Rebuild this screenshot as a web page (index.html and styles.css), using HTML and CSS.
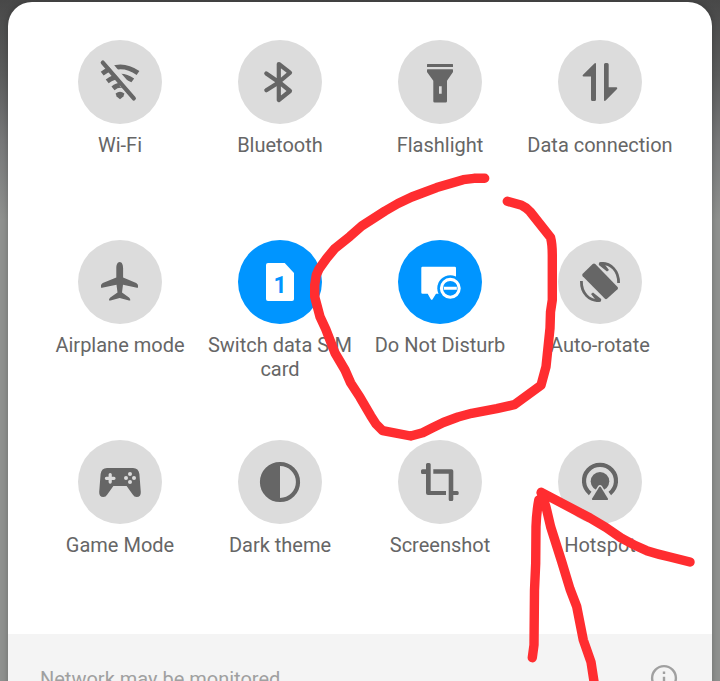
FILE: index.html
```html
<!DOCTYPE html>
<html lang="en">
<head>
<meta charset="utf-8">
<title>Quick settings</title>
<link rel="stylesheet" href="styles.css">
</head>
<body>
<main class="sheet">
  <section class="tiles">
    <div class="tile">
      <svg class="icon" viewBox="0 0 84 84">
        <g class="line arcs">
          <path d="M24.2 33.6Q42 20.5 60 33"/>
          <path d="M29.2 41.4Q42 31.5 54.8 40.4"/>
          <path d="M35 48.4Q42 42.5 49 47.8"/>
        </g>
        <path class="gap" d="M27.4 19L62 59"/>
        <path class="gap" d="M43 44L53 51"/>
        <path class="line slash" d="M24.8 22.6L55.8 58.4"/>
        <path d="M37.6 53.6Q42 49.8 46.4 53.6L45.4 56.5L42 59.3L38.6 56.5Z"/>
      </svg>
      <span class="label">Wi-Fi</span>
    </div>
    <div class="tile">
      <svg class="icon" viewBox="0 0 84 84">
        <path class="line" d="M28.3 33.4L41 42.2L28.3 50.2M40.8 24L52 32.6L41 42L52 51L40.8 60Z"/>
      </svg>
      <span class="label">Bluetooth</span>
    </div>
    <div class="tile">
      <svg class="icon" viewBox="0 0 84 84">
        <rect x="29" y="24" width="26" height="3" rx=".5"/>
        <path fill-rule="evenodd" d="M29.5 29.3H54.5Q55 29.3 55 30V32L49 40.8V61.2Q49 62.6 47.6 62.6H36.7Q35.3 62.6 35.3 61.2V40.8L29 32V30Q29 29.3 29.5 29.3ZM41 46.3V53.7H43.7V46.3Z"/>
      </svg>
      <span class="label">Flashlight</span>
    </div>
    <div class="tile">
      <svg class="icon" viewBox="0 0 84 84">
        <path d="M36.4 23.4Q38 22.3 38 24.2V59.5Q38 61 36.5 61H34.5Q33 61 33 59.5V36.6H25.5Q24 36 24.8 34.9ZM47.5 23H49.2Q50.7 23 50.7 24.5V47.2H58.5Q60 47.7 59 49L47.7 60.6Q46 61.7 46 59.8V24.5Q46 23 47.5 23Z"/>
      </svg>
      <span class="label">Data connection</span>
    </div>

    <div class="tile">
      <svg class="icon" viewBox="0 0 84 84">
        <path d="M41.7 22C44 22 45.1 25 45.1 28V37.5L58.2 43Q60 44 60 45.5V47.2Q60 48 59 47.7L45 44.7L44 52.5L51 57.5Q52.3 58.6 52.3 60Q52.3 60.8 51 60.4L41.7 58L32.5 60.4Q31 60.8 31 60Q31 58.6 32.3 57.5L39.5 52.5L38.5 44.7L24 47.7Q23 48 23 47.2V45.5Q23 44 24.8 43L38.3 37.5V28C38.3 25 39.4 22 41.7 22Z"/>
      </svg>
      <span class="label">Airplane mode</span>
    </div>
    <div class="tile on">
      <svg class="icon" viewBox="0 0 84 84">
        <path d="M30 23H46.7L56 33V59Q56 61 54 61H30Q28 61 28 59V25Q28 23 30 23Z"/>
        <text class="digit" x="42" y="53.3">1</text>
      </svg>
      <span class="label">Switch data SIM card</span>
    </div>
    <div class="tile on">
      <svg class="icon" viewBox="0 0 84 84">
        <path d="M24.5 26.7H56.8Q58 26.7 58 27.9V53.7H38L34.6 59.2Q33.7 60.2 32.8 59.2L29.7 53.7H24.5Q23.3 53.7 23.3 52.5V27.9Q23.3 26.7 24.5 26.7Z"/>
        <circle class="halo" cx="52.3" cy="48.3" r="13"/>
        <path class="ring" d="M43.4 48.3a8.9 8.9 0 1 0 17.8 0a8.9 8.9 0 1 0-17.8 0ZM45.8 48.3H58.8"/>
      </svg>
      <span class="label">Do Not Disturb</span>
    </div>
    <div class="tile">
      <svg class="icon" viewBox="0 0 84 84">
        <path d="M34.7 24Q36 23 37.3 24L59.6 47Q60.6 48.2 59.5 49.3L49 58.8Q47.9 59.7 46.7 58.6L24.7 36.2Q23.6 35 24.7 33.8Z"/>
        <g id="turn">
          <path class="line thin" d="M42 23.6C53 22.5 60.8 31 60.6 43"/>
          <path d="M41 22.5L46 22.2L47.5 25.6L51 30L49 31.4L40.8 25Z"/>
        </g>
        <use href="#turn" transform="rotate(180 42 42)"/>
      </svg>
      <span class="label">Auto-rotate</span>
    </div>

    <div class="tile">
      <svg class="icon" viewBox="0 0 84 84">
        <path d="M29 28H55Q60.6 28 61.4 34L62.8 52Q63 57 58.7 57Q56.2 57 54.7 54.5L48.6 46H35.4L29.3 54.5Q27.8 57 25.3 57Q21 57 21.2 52L22.6 34Q23.4 28 29 28Z"/>
        <path class="cut" d="M28.4 38.3H36M32.2 34.5V42.1"/>
        <g class="dots"><circle cx="52" cy="34.1" r="2"/><circle cx="52" cy="42" r="2"/><circle cx="48" cy="38" r="2"/><circle cx="56" cy="38" r="2"/></g>
      </svg>
      <span class="label">Game Mode</span>
    </div>
    <div class="tile">
      <svg class="icon" viewBox="0 0 84 84">
        <circle class="line" cx="42" cy="42" r="18"/>
        <path d="M42 23V61A19 19 0 0 1 42 23Z"/>
      </svg>
      <span class="label">Dark theme</span>
    </div>
    <div class="tile">
      <svg class="icon" viewBox="0 0 84 84">
        <path d="M29.5 23H31.2Q32.7 23 32.7 24.5V51H48V55H30Q28 55 28 53V34H24.5Q23 34 23 32.5V30.8Q23 29.3 24.5 29.3H28V24.5Q28 23 29.5 23ZM35.3 29.3H53.5Q55.3 29.3 55.3 31V51H59.2Q60.7 51 60.7 52.5V53.5Q60.7 55 59.2 55H55.3V59.5Q55.3 61 53.8 61H52.2Q50.7 61 50.7 59.5V33.7H35.3Z"/>
      </svg>
      <span class="label">Screenshot</span>
    </div>
    <div class="tile">
      <svg class="icon" viewBox="0 0 84 84">
        <path class="line ends" d="M32.2 53.5A16 16 0 1 1 51.8 53.5"/>
        <circle cx="42" cy="41.3" r="9.3"/>
        <path class="wedge" d="M41.2 47Q42 45.8 42.8 47L50 58.7Q50.5 60 49 60H35Q33.5 60 34 58.7Z"/>
      </svg>
      <span class="label">Hotspot</span>
    </div>
  </section>
  <footer class="footer">
    <span>Network may be monitored</span>
    <svg class="info" viewBox="0 0 28 28">
      <circle cx="14" cy="14" r="11.9"/>
      <path d="M14 7.4V10M14 12.8V21"/>
    </svg>
  </footer>
</main>
<svg class="marker" viewBox="0 0 720 681">
  <path d="M484.7 178.3L474 178.3L463.3 179.7L436.7 187.6L411.7 197L398 203.5L385 211L361.7 226L350 236.3L335 248.3L326.7 258.3L319 269L316.3 275L314.7 285V296.7L320 316.7L325.7 329L335 353L345 370L350.7 383L360 397.3L370.7 415.7L376 424L382.7 430.7L410.7 436L422.7 432.7L432 428L443.3 422.5L458 417L471.7 413.3L496.7 408.7L514.3 404.7L541 385.3L546 366.7L550 328.3L550.5 312L552.3 300V255Q552.3 244 550.5 237.3L530 211.5Q526 207 521.7 205.3L507.3 201.3"/>
  <path d="M690 562L670 557Q657 554 646.7 550.7Q634 545.5 621.7 538.3L606 527.5L590 518L541.3 492.3"/>
  <path d="M538.8 500Q536.5 512 536 526.7L535.7 563.3L534.5 590L534 645L532.3 657.7"/>
  <path d="M541.3 493L546 507L550.7 527L561.5 561L570 589L576.7 606.5L583.3 640L591 662L594.7 686"/>
</svg>
</body>
</html>
```
FILE: styles.css
```css
* {
  box-sizing: border-box;
}

body {
  margin: 0;
  height: 681px;
  overflow: hidden;
  padding: 2px 8px 0;
  font-family: Roboto, "Liberation Sans", sans-serif;
  font-size: 20px;
  line-height: 24px;
  background: linear-gradient(#484848 0, #5c5d5d 75px, #777879 140px, #909290 220px, #909290 100%);
}

.sheet {
  height: 700px;
  overflow: hidden;
  border-radius: 24px 24px 0 0;
  background: #fff;
  box-shadow: 0 0 7px rgba(0, 0, 0, 0.25);
}

.tiles {
  display: grid;
  grid-template-columns: repeat(4, 160px);
  grid-auto-rows: 200px;
  height: 632px;
  padding: 38px 32px 0;
}

.tile {
  --disc: #dcdcdc;
  --glyph: #666;
  display: flex;
  flex-direction: column;
  align-items: center;
  gap: 9px;
}

.on {
  --disc: #0095ff;
  --glyph: #fff;
}

.icon {
  width: 84px;
  height: 84px;
  flex: none;
  border-radius: 50%;
  background: var(--disc);
  fill: var(--glyph);
}

.label {
  width: 150px;
  color: #666;
  text-align: center;
}

.line {
  fill: none;
  stroke: var(--glyph);
  stroke-width: 4.2;
  stroke-linecap: round;
  stroke-linejoin: round;
}

.arcs,
.ends {
  stroke-linecap: butt;
}

.arcs {
  stroke-width: 4.8;
}

.thin {
  stroke-width: 2.8;
  stroke-linecap: butt;
}

.gap {
  fill: none;
  stroke: var(--disc);
  stroke-width: 5;
}

.digit {
  fill: var(--disc);
  font-size: 23px;
  font-weight: 700;
  text-anchor: middle;
}

.halo,
.dots {
  fill: var(--disc);
}

.ring {
  fill: none;
  stroke: var(--glyph);
  stroke-width: 3.1;
}

.cut {
  stroke: var(--disc);
  stroke-width: 3.2;
  stroke-linecap: round;
}

.wedge {
  stroke: var(--disc);
  stroke-width: 3;
  paint-order: stroke;
}

.footer {
  display: flex;
  justify-content: space-between;
  height: 68px;
  padding: 30px 34px 0 32px;
  background: #f4f4f4;
  color: #a0a0a0;
}

.footer span {
  padding-top: 3px;
}

.info {
  width: 28px;
  height: 28px;
  fill: none;
  stroke: #a0a0a0;
  stroke-width: 2.4;
}

.marker {
  position: absolute;
  inset: 0;
  width: 720px;
  height: 681px;
  fill: none;
  stroke: #ff2d30;
  stroke-width: 9.4;
  stroke-linecap: round;
  stroke-linejoin: round;
  pointer-events: none;
}
```
